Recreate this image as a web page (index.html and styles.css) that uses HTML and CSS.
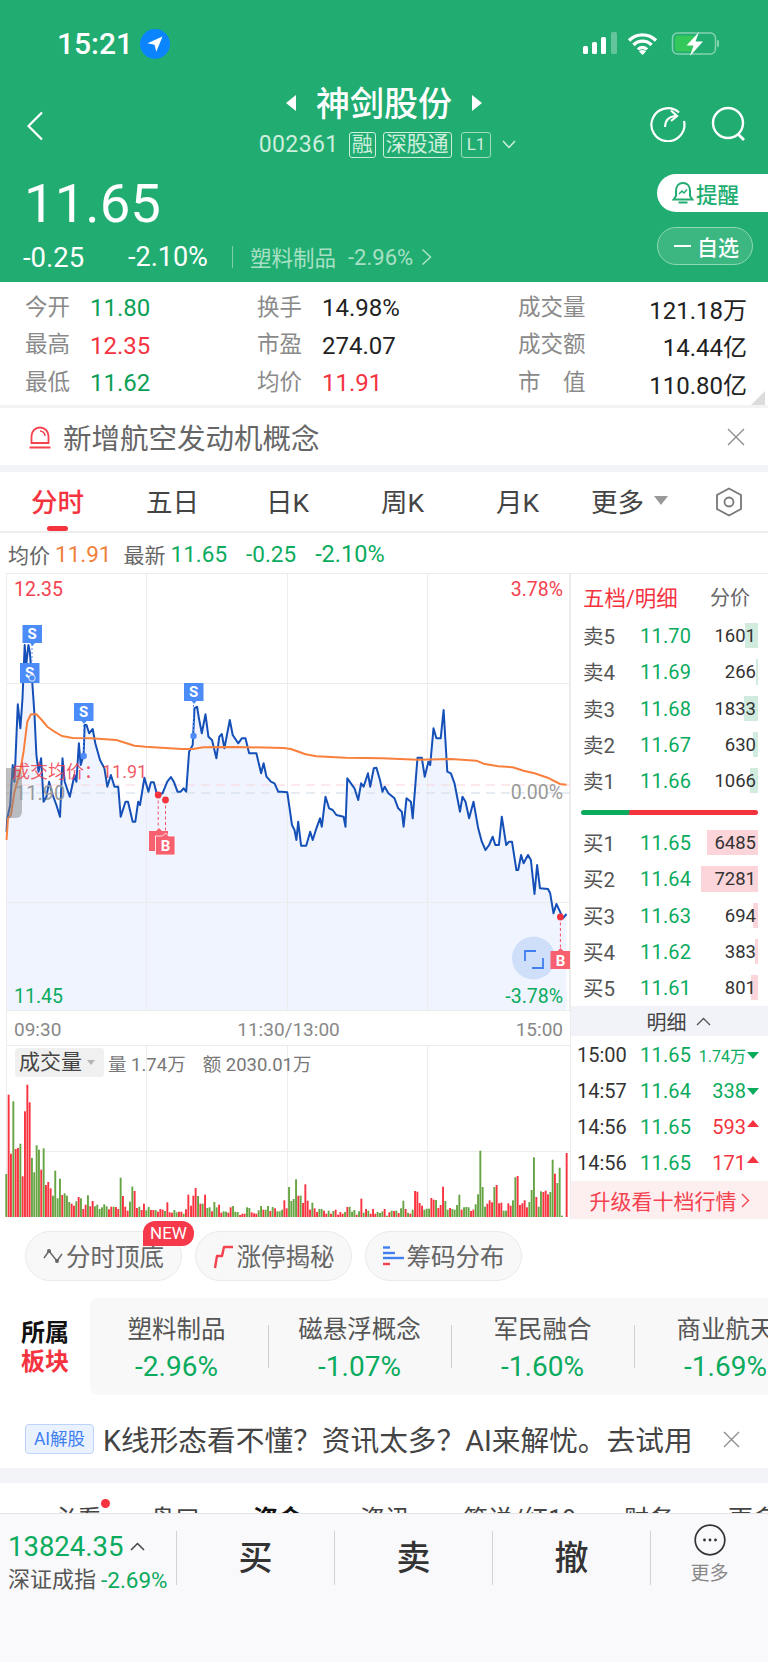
FILE: index.html
```html
<!DOCTYPE html>
<html lang="zh-CN">
<head>
    <meta charset="UTF-8" />
    <meta name="viewport" content="width=device-width, initial-scale=1.0" />
    <title>神剑股份</title>
    <link rel="stylesheet" href="styles.css">
</head>
<body>
    <!-- Green header -->
    <div class="top">
        <div class="status">
            <div class="status-left">
                <span class="clock">15:21</span>
                <span class="locate">
                    <svg width="18" height="18" viewBox="0 0 18 18"><path d="M16.5 1.5 1.5 8.2l7 1.6 1.8 7z" fill="#fff"/></svg>
                </span>
            </div>
            <svg class="status-right" width="137" height="24" viewBox="0 0 137 24">
                <rect x="0" y="14" width="5" height="8" rx="1.5" fill="#fff"/>
                <rect x="9" y="10" width="5" height="12" rx="1.5" fill="#fff"/>
                <rect x="18" y="5" width="5" height="17" rx="1.5" fill="#fff"/>
                <rect x="28" y="0" width="6" height="22" rx="1.5" fill="#fff" opacity=".3"/>
                <path d="M46 8.5a19 19 0 0 1 27 0M50.5 13a12.5 12.5 0 0 1 18 0M55 17.5a6 6 0 0 1 9 0" fill="none" stroke="#fff" stroke-width="3.4"/>
                <path d="M59.5 23l-3.5-3.5a5 5 0 0 1 7 0z" fill="#fff"/>
                <rect x="89.5" y="1" width="43" height="21" rx="5" fill="none" stroke="#fff" stroke-opacity=".45" stroke-width="1.5"/>
                <rect x="92" y="3.5" width="21" height="16" rx="3" fill="#34c85a"/>
                <rect x="134" y="8" width="2" height="7" rx="1" fill="#fff" opacity=".45"/>
                <path d="M116 0 103.5 13.5h7L107 24l13-14.5h-7.5z" fill="#fff"/>
            </svg>
        </div>

        <div class="head">
            <div class="head-left">
                <svg width="18" height="30" viewBox="0 0 18 30"><path d="M16 1.5 2.5 15 16 28.5" fill="none" stroke="#fff" stroke-width="2.2"/></svg>
            </div>
            <div class="head-center">
                <div class="title-row">
                    <span class="arrow-left"></span>
                    <span class="title">神剑股份</span>
                    <span class="arrow-right"></span>
                </div>
                <div class="code-row">
                    <span class="code">002361</span>
                    <span class="code-tag">融</span>
                    <span class="code-tag">深股通</span>
                    <span class="code-tag code-tag-dim">L1</span>
                    <svg width="14" height="9" viewBox="0 0 14 9"><path d="M1 1l6 6.5L13 1" fill="none" stroke="#d4f0e2" stroke-width="1.4"/></svg>
                </div>
            </div>
            <div class="head-right">
                <svg width="36" height="36" viewBox="0 0 36 36"><path d="M29 6.5A16.5 16.5 0 1 0 34 15" fill="none" stroke="#fff" stroke-width="2.2"/><path d="M15 21c0-6 3-10 10-11" fill="none" stroke="#fff" stroke-width="2.2"/><path d="M21 4.5l6 5.5-6 5" fill="none" stroke="#fff" stroke-width="2.2"/></svg>
                <svg width="36" height="36" viewBox="0 0 36 36"><circle cx="17" cy="17" r="15" fill="none" stroke="#fff" stroke-width="2.4"/><path d="M27 28l6 6" stroke="#fff" stroke-width="2.8"/></svg>
            </div>
        </div>

        <div class="quote">
            <div class="quote-left">
                <div class="price">11.65</div>
                <div class="change-row">
                    <span class="change-a">-0.25</span>
                    <span class="change-b">-2.10%</span>
                    <span class="change-sep"></span>
                    <span class="sector-name">塑料制品</span>
                    <span class="sector-pct">-2.96%</span>
                    <svg width="11" height="18" viewBox="0 0 11 18"><path d="M1.5 1.5 9.5 9l-8 7.5" fill="none" stroke="#b4e4cd" stroke-width="1.4"/></svg>
                </div>
            </div>
            <div class="quote-right">
                <div class="btn-remind">
                    <svg width="22" height="24" viewBox="0 0 22 24"><path d="M11 2c-5 0-7 4-7 8v5l-2.5 3.5h19L18 15v-5c0-4-2-8-7-8z" fill="none" stroke="#21ad71" stroke-width="2"/><path d="M6.5 21.5h9" stroke="#21ad71" stroke-width="2"/><path d="M7 13l3-3 2 2 3-3.5" fill="none" stroke="#21ad71" stroke-width="1.5"/></svg>
                    <span>提醒</span>
                </div>
                <div class="btn-fav">
                    <span class="fav-minus"></span>
                    <span>自选</span>
                </div>
            </div>
        </div>
    </div>

    <!-- Stats -->
    <div class="stats">
        <div class="stat"><span class="stat-label">今开</span><span class="stat-value green">11.80</span></div>
        <div class="stat"><span class="stat-label">换手</span><span class="stat-value">14.98%</span></div>
        <div class="stat stat-wide"><span class="stat-label">成交量</span><span class="stat-value">121.18万</span></div>
        <div class="stat"><span class="stat-label">最高</span><span class="stat-value red">12.35</span></div>
        <div class="stat"><span class="stat-label">市盈</span><span class="stat-value">274.07</span></div>
        <div class="stat stat-wide"><span class="stat-label">成交额</span><span class="stat-value">14.44亿</span></div>
        <div class="stat"><span class="stat-label">最低</span><span class="stat-value green">11.62</span></div>
        <div class="stat"><span class="stat-label">均价</span><span class="stat-value red">11.91</span></div>
        <div class="stat stat-wide"><span class="stat-label">市　值</span><span class="stat-value">110.80亿</span></div>
        <span class="stats-corner"></span>
    </div>

    <!-- Notice -->
    <div class="notice">
        <svg width="22" height="24" viewBox="0 0 22 24"><path d="M2.5 18V11a8.5 8.5 0 0 1 17 0v7z" fill="none" stroke="#f5424f" stroke-width="1.8"/><path d="M11 6a5 5 0 0 1 5 5" fill="none" stroke="#f5424f" stroke-width="1.5"/><path d="M.5 22.5h21" stroke="#f5424f" stroke-width="2"/></svg>
        <span class="notice-text">新增航空发动机概念</span>
        <svg class="close" width="18" height="18" viewBox="0 0 18 18"><path d="M1 1l16 16M17 1 1 17" stroke="#8c8c8c" stroke-width="1.3"/></svg>
    </div>

    <!-- Period tabs -->
    <div class="tabs">
        <span class="tab tab-active">分时</span>
        <span class="tab">五日</span>
        <span class="tab">日K</span>
        <span class="tab">周K</span>
        <span class="tab">月K</span>
        <span class="tab tab-more">更多<i class="tab-caret"></i></span>
        <span class="tab-setting">
            <svg width="28" height="30" viewBox="0 0 28 30"><path d="M14 1.5 26 8v14l-12 6.5L2 22V8z" fill="none" stroke="#777" stroke-width="1.8"/><circle cx="14" cy="15" r="4.5" fill="none" stroke="#777" stroke-width="1.8"/></svg>
        </span>
    </div>

    <div class="info-row">
        <span>均价</span><span class="orange info-gap">11.91</span>
        <span class="info-next">最新</span><span class="green2 info-gap">11.65</span>
        <span class="green2 info-num">-0.25</span>
        <span class="green2 info-num info-pct">-2.10%</span>
    </div>

    <!-- Chart + order book -->
    <div class="market">
        <div class="chart-col">
            <div class="price-chart">
                <svg id="price-svg" width="570" height="438" viewBox="0 0 570 438">
                    <path id="price-area" fill="#eff4fe"/>
                    <g stroke="#ececec" stroke-width="1">
                        <path d="M6.5 0V438M146.5 0V438M287.5 0V438M427.5 0V438M569.5 0V438"/>
                        <path d="M6 .5H570M6 110.5H570M6 329.5H570M6 437.5H570"/>
                    </g>
                    <path d="M6 212H570" stroke="#fbd3d8" stroke-width="1.2" stroke-dasharray="9 6"/>
                    <path d="M6 220H570" stroke="#cdd9e6" stroke-width="1.2" stroke-dasharray="9 6"/>
                    <polyline id="price-line" fill="none" stroke="#1550b8" stroke-width="2" stroke-linejoin="round"/>
                    <polyline id="avg-line" fill="none" stroke="#f9803c" stroke-width="2" stroke-linejoin="round"/>

                    <!-- sell marks -->
                    <g class="mark-s">
                        <path d="M32 71v17" stroke="#4b8cf8" stroke-width="1" stroke-dasharray="2 2"/>
                        <path d="M22.5 52H42v18h-7l-2.500 3-2.500-3h-7.500z"/><text x="32" y="66">S</text>
                        <path d="M20 90h19.500v20H20z"/><text x="29.5" y="105">S</text>
                        <circle cx="32" cy="105" r="3.2" stroke="#fff" stroke-width=".8"/>
                        <path d="M74 130h19.500v18h-7l-2.500 3-2.500-3H74z"/><text x="83.7" y="144">S</text>
                        <circle cx="83.7" cy="183" r="3.2"/>
                        <path d="M83.7 152v30" stroke="#4b8cf8" stroke-width="1" stroke-dasharray="2 2"/>
                        <path d="M184 110h19.500v18h-7l-2.500 3-2.500-3H184z"/><text x="193.5" y="124">S</text>
                        <circle cx="193.5" cy="163" r="3.2"/>
                        <path d="M193.5 132v30" stroke="#4b8cf8" stroke-width="1" stroke-dasharray="2 2"/>
                    </g>

                    <!-- buy marks -->
                    <g class="mark-b">
                        <path d="M158.2 222v33M165.5 227v33M560.4 344v31" stroke="#f55060" stroke-width="1" stroke-dasharray="3 2.5" fill="none"/>
                        <circle cx="158.2" cy="222" r="3.4" fill="#f5333f"/>
                        <circle cx="165.5" cy="227" r="3.4" fill="#f5333f"/>
                        <circle cx="560.4" cy="344" r="3.4" fill="#f5333f"/>
                    </g>
                    <circle cx="533.5" cy="385" r="21.5" fill="#cfdffa"/>
                    <path d="M536 378h-11v10M532 395h11v-10" fill="none" stroke="#3f7ff0" stroke-width="1.8"/>
                    <g class="mark-b">
                        <path d="M149 258h7l3-3 3 3h6v20h-19z" fill="#f7606f"/>
                        <path d="M155.5 263h7l3-3 3 3h6.500v19h-19.500z" fill="#f7606f" stroke="#fff" stroke-width=".8"/>
                        <text x="165.5" y="278">B</text>
                        <path d="M550.5 378h7l3-3 3 3h6.500v18h-19.500z" fill="#f7606f"/>
                        <text x="560.5" y="393">B</text>
                    </g>
                </svg>
                <span class="axis-label top-left red-soft">12.35</span>
                <span class="axis-label top-right red-soft">3.78%</span>
                <span class="axis-label mid-right">0.00%</span>
                <span class="axis-label bottom-left green-soft">11.45</span>
                <span class="axis-label bottom-right green-soft">-3.78%</span>
                <span class="cross-handle"></span>
                <span class="cross-price">11.90</span>
                <span class="avg-tip">成交均价：11.91</span>
            </div>
            <div class="time-axis">
                <span>09:30</span><span>11:30/13:00</span><span>15:00</span>
            </div>
            <div class="volume-chart">
                <svg id="volume-svg" width="570" height="172" viewBox="0 0 570 172">
                    <g stroke="#ececec" stroke-width="1">
                        <path d="M6.5 0V172M146.5 0V172M287.5 0V172M427.5 0V172"/>
                        <path d="M6 .5H570M6 106.5H570"/>
                    </g>
                    <g id="volume-bars"></g>
                </svg>
                <div class="volume-head">
                    <span class="volume-tag">成交量<i class="volume-caret"></i></span>
                    <span class="volume-text">量 1.74万</span>
                    <span class="volume-text">额 2030.01万</span>
                </div>
            </div>
        </div>

        <div class="book">
            <div class="book-head"><span class="book-title">五档/明细</span><span class="book-alt">分价</span></div>
            <div class="book-row"><i class="depth depth-sell" style="width:13px"></i><span class="book-label">卖5</span><span class="book-price">11.70</span><span class="book-qty">1601</span></div>
            <div class="book-row"><i class="depth depth-sell" style="width:2px"></i><span class="book-label">卖4</span><span class="book-price">11.69</span><span class="book-qty">266</span></div>
            <div class="book-row"><i class="depth depth-sell" style="width:14px"></i><span class="book-label">卖3</span><span class="book-price">11.68</span><span class="book-qty">1833</span></div>
            <div class="book-row"><i class="depth depth-sell" style="width:5px"></i><span class="book-label">卖2</span><span class="book-price">11.67</span><span class="book-qty">630</span></div>
            <div class="book-row"><i class="depth depth-sell" style="width:8px"></i><span class="book-label">卖1</span><span class="book-price">11.66</span><span class="book-qty">1066</span></div>
            <div class="ratio"></div>
            <div class="book-row"><i class="depth depth-buy" style="width:51px"></i><span class="book-label">买1</span><span class="book-price">11.65</span><span class="book-qty">6485</span></div>
            <div class="book-row"><i class="depth depth-buy" style="width:57px"></i><span class="book-label">买2</span><span class="book-price">11.64</span><span class="book-qty">7281</span></div>
            <div class="book-row"><i class="depth depth-buy" style="width:5px"></i><span class="book-label">买3</span><span class="book-price">11.63</span><span class="book-qty">694</span></div>
            <div class="book-row"><i class="depth depth-buy" style="width:3px"></i><span class="book-label">买4</span><span class="book-price">11.62</span><span class="book-qty">383</span></div>
            <div class="book-row"><i class="depth depth-buy" style="width:7px"></i><span class="book-label">买5</span><span class="book-price">11.61</span><span class="book-qty">801</span></div>
            <div class="detail-band">
                明细
                <svg width="15" height="9" viewBox="0 0 15 9"><path d="M1 8l6.5-6.5L14 8" fill="none" stroke="#555" stroke-width="1.3"/></svg>
            </div>
            <div class="trade-row"><span class="trade-time">15:00</span><span class="book-price">11.65</span><span class="trade-qty trade-small green2">1.74万</span><i class="tri-down"></i></div>
            <div class="trade-row"><span class="trade-time">14:57</span><span class="book-price">11.64</span><span class="trade-qty green2">338</span><i class="tri-down"></i></div>
            <div class="trade-row"><span class="trade-time">14:56</span><span class="book-price">11.65</span><span class="trade-qty red">593</span><i class="tri-up"></i></div>
            <div class="trade-row"><span class="trade-time">14:56</span><span class="book-price">11.65</span><span class="trade-qty red">171</span><i class="tri-up"></i></div>
            <div class="upgrade">
                升级看十档行情
                <svg width="9" height="15" viewBox="0 0 9 15"><path d="M1 1l6.5 6.5L1 14" fill="none" stroke="#f5424f" stroke-width="1.4"/></svg>
            </div>
        </div>
    </div>

    <!-- Feature chips -->
    <div class="chips">
        <div class="chip">
            <svg width="20" height="16" viewBox="0 0 20 16"><path d="M1 10l5-7 8 10 5-7" fill="none" stroke="#666" stroke-width="1.4"/><circle cx="6" cy="3" r="2" fill="#666"/><circle cx="14" cy="13" r="2" fill="#666"/></svg>
            <span>分时顶底</span>
            <span class="chip-new">NEW</span>
        </div>
        <div class="chip">
            <svg width="21" height="26" viewBox="0 0 21 26"><path d="M2 25l2-12h5l2-9h9" fill="none" stroke="#f5424f" stroke-width="2.4" stroke-linejoin="round"/></svg>
            <span>涨停揭秘</span>
        </div>
        <div class="chip">
            <svg width="21" height="22" viewBox="0 0 21 22"><path d="M0 2.5h7" stroke="#3f7ff0" stroke-width="2.4"/><path d="M0 8h12" stroke="#3f7ff0" stroke-width="2.4"/><path d="M0 13h21" stroke="#3f7ff0" stroke-width="2.4"/><path d="M0 19h7" stroke="#f5424f" stroke-width="2.4"/></svg>
            <span>筹码分布</span>
        </div>
    </div>

    <!-- Sectors -->
    <div class="sectors">
        <div class="sectors-title"><span>所属</span><span class="red">板块</span></div>
        <div class="sector-card">
            <div class="sector"><span class="sector-title">塑料制品</span><span class="sector-value">-2.96%</span></div>
            <div class="sector"><span class="sector-title">磁悬浮概念</span><span class="sector-value">-1.07%</span></div>
            <div class="sector"><span class="sector-title">军民融合</span><span class="sector-value">-1.60%</span></div>
            <div class="sector"><span class="sector-title">商业航天</span><span class="sector-value">-1.69%</span></div>
        </div>
    </div>

    <!-- AI banner -->
    <div class="ai-row">
        <span class="ai-tag">AI解股</span>
        <span class="ai-text">K线形态看不懂？资讯太多？AI来解忧。去试用</span>
        <svg class="close" width="17" height="17" viewBox="0 0 17 17"><path d="M1 1l15 15M16 1 1 16" stroke="#8c8c8c" stroke-width="1.3"/></svg>
    </div>

    <!-- Info tabs, cut off by the bottom bar -->
    <div class="more-tabs">
        <span class="more-tab" style="left:52px">必看<i class="more-dot"></i></span>
        <span class="more-tab" style="left:150px">盘口</span>
        <span class="more-tab more-tab-on" style="left:253px">资金</span>
        <span class="more-tab" style="left:360px">资讯</span>
        <span class="more-tab" style="left:463px">筹说/红19</span>
        <span class="more-tab" style="left:624px">财务</span>
        <span class="more-tab" style="left:728px">更多</span>
    </div>

    <!-- Bottom bar -->
    <div class="bottom">
        <div class="index-box">
            <div class="index-top"><span class="index-value">13824.35</span><svg width="15" height="9" viewBox="0 0 15 9"><path d="M1 8l6.5-6.5L14 8" fill="none" stroke="#444" stroke-width="1.5"/></svg></div>
            <div class="index-bottom"><span class="index-name">深证成指</span><span class="index-pct">-2.69%</span></div>
        </div>
        <div class="action">买</div>
        <div class="action">卖</div>
        <div class="action">撤</div>
        <div class="action-more">
            <svg width="32" height="32" viewBox="0 0 32 32"><circle cx="16" cy="16" r="14.8" fill="none" stroke="#333" stroke-width="1.7"/><circle cx="10.5" cy="16" r="1.4" fill="#333"/><circle cx="16" cy="16" r="1.4" fill="#333"/><circle cx="21.5" cy="16" r="1.4" fill="#333"/></svg>
            <span>更多</span>
        </div>
    </div>

    <script src="chart.js"></script>
</body>
</html>
```

FILE: styles.css
```css
* {
    box-sizing: border-box;
}
html, body {
    margin: 0;
    padding: 0;
}
body {
    width: 768px;
    height: 1662px;
    overflow: hidden;
    background-color: #fff;
    font-family: Roboto, "Noto Sans CJK SC", sans-serif;
    color: #333;
}
i {
    font-style: normal;
}
.green { color: #0a9f55; }
.green2 { color: #0bab5e; }
.red { color: #f5333f; }
.orange { color: #f0813a; }

/* Green header */
.top {
    height: 282px;
    background-color: #21ad71;
    color: #fff;
}
.status {
    height: 82px;
    padding: 32px 48px 0 57px;
    display: flex;
    justify-content: space-between;
    align-items: flex-start;
}
.status-left {
    display: flex;
    align-items: center;
    height: 24px;
}
.clock {
    font-size: 30px;
    font-weight: 500;
    line-height: 24px;
}
.locate {
    width: 30px;
    height: 30px;
    margin-left: 7px;
    border-radius: 50%;
    background-color: #0a84ff;
    display: flex;
    align-items: center;
    justify-content: center;
}
.head {
    display: grid;
    grid-template-columns: 1fr auto 1fr;
    height: 78px;
}
.head-left {
    padding: 29px 0 0 26px;
}
.head-right {
    display: flex;
    justify-content: flex-end;
    gap: 25px;
    padding: 24px 21px 0 0;
}
.head-center {
    display: flex;
    flex-direction: column;
    align-items: center;
}
.title-row {
    display: flex;
    align-items: center;
    height: 40px;
    gap: 20px;
    margin-top: 1px;
}
.title {
    font-size: 34px;
    font-weight: 500;
    line-height: 40px;
    position: relative;
    top: 1px;
}
.arrow-left, .arrow-right {
    width: 0;
    height: 0;
    border-top: 8px solid transparent;
    border-bottom: 8px solid transparent;
}
.arrow-left { border-right: 10px solid #fff; }
.arrow-right { border-left: 10px solid #fff; }
.code-row {
    display: flex;
    align-items: center;
    margin: 8px 0 0 7px;
    color: #cdeedd;
}
.code {
    font-size: 23px;
    margin-right: 10px;
    letter-spacing: .4px;
}
.code-tag {
    height: 26px;
    line-height: 23px;
    padding: 0 2px;
    margin-right: 7px;
    border: 1px solid #cdeedd;
    border-radius: 3px;
    font-size: 21px;
}
.code-tag-dim {
    padding: 0 5px;
    font-size: 17px;
    margin: 0 11px 0 2px;
    border-color: #9ddcbd;
}
.quote {
    display: flex;
    justify-content: space-between;
}
.quote-left {
    padding: 15px 0 0 23px;
}
.price {
    font-size: 54.5px;
    line-height: 56px;
    margin-left: 1px;
}
.change-row {
    display: flex;
    align-items: center;
    height: 30px;
    margin-top: 11px;
}
.change-a {
    font-size: 27.5px;
    width: 105px;
}
.change-b {
    font-size: 27px;
    width: 104px;
}
.change-sep {
    width: 1px;
    height: 22px;
    background-color: #7ccfa8;
    margin-right: 17px;
}
.sector-name {
    font-size: 21.5px;
    color: #a8e0c5;
    margin: -2px 12px 0 0;
}
.sector-pct {
    font-size: 22px;
    color: #a8e0c5;
    margin-right: 8px;
}
.quote-right {
    width: 111px;
    padding-top: 14px;
}
.btn-remind {
    height: 38px;
    background-color: #fff;
    border-radius: 19px 0 0 19px;
    color: #21ad71;
    font-size: 21.5px;
    font-weight: 500;
    display: flex;
    align-items: center;
    padding-left: 15px;
    gap: 2px;
}
.btn-fav {
    width: 96px;
    height: 38px;
    margin-top: 15px;
    border: 1px solid #8cd8b4;
    border-radius: 19px;
    background-color: rgba(255, 255, 255, .12);
    font-size: 21px;
    font-weight: 500;
    display: flex;
    align-items: center;
    padding-left: 16px;
    gap: 6px;
}
.fav-minus {
    width: 17px;
    height: 2px;
    background-color: #fff;
}

/* Stats */
.stats {
    position: relative;
    height: 126px;
    padding: 7px 21px 0 25px;
    border-bottom: 3px solid #f3f3f3;
    display: grid;
    grid-template-columns: 232px 261px 1fr;
    grid-auto-rows: 37.5px;
}
.stat {
    display: flex;
    align-items: center;
    gap: 20px;
}
.stat-wide {
    justify-content: space-between;
}
.stat-label {
    font-size: 22.5px;
    color: #8a8a8a;
    margin-top: -6px;
}
.stat-value {
    font-size: 24px;
    color: #222;
    margin-top: 1px;
}
.stat-value.green { color: #0a9f55; }
.stat-value.red { color: #f5333f; }
.stats-corner {
    position: absolute;
    right: 3px;
    bottom: 0;
    width: 0;
    height: 0;
    border-left: 14px solid transparent;
    border-bottom: 14px solid #dcdcdc;
}

/* Notice */
.notice {
    height: 57px;
    padding: 0 23px 0 29px;
    display: flex;
    align-items: center;
}
.notice-text {
    font-size: 28.5px;
    color: #666;
    margin-left: 12px;
}
.close {
    margin-left: auto;
}

/* Tabs */
.tabs {
    height: 68px;
    border-top: 7px solid #f2f4f8;
    border-bottom: 2px solid #eee;
    display: flex;
    align-items: center;
}
.tab {
    position: relative;
    width: 115px;
    height: 100%;
    display: flex;
    align-items: center;
    justify-content: center;
    font-size: 26.5px;
    color: #444;
    padding-bottom: 3px;
}
.tab-more {
    padding-right: 6px;
}
.tab-active {
    color: #f5333f;
    font-weight: 500;
}
.tab-active::after {
    content: "";
    position: absolute;
    left: 47px;
    bottom: 0;
    width: 21px;
    height: 5px;
    border-radius: 3px;
    background-color: #f5333f;
}
.tab-caret {
    width: 0;
    height: 0;
    margin-left: 10px;
    border-left: 7px solid transparent;
    border-right: 7px solid transparent;
    border-top: 9px solid #999;
}
.tab-setting {
    flex: 1;
    display: flex;
    justify-content: center;
}
.info-row {
    height: 40px;
    padding: 1px 0 0 8px;
    display: flex;
    align-items: center;
    font-size: 21px;
    color: #666;
}
.info-gap {
    margin-left: 5px;
    font-size: 22.5px;
}
.info-next {
    margin-left: 12px;
}
.info-num {
    margin-left: 19px;
    font-size: 22.5px;
}
.info-pct {
    font-size: 23.5px;
}

/* Chart + order book */
.market {
    display: flex;
    height: 646px;
}
.chart-col {
    width: 570px;
}
.price-chart {
    position: relative;
    height: 438px;
}
.price-chart svg, .volume-chart svg {
    display: block;
}
.mark-s path, .mark-s circle {
    fill: #4b8cf8;
}
.mark-s text, .mark-b text {
    fill: #fff;
    font-size: 15px;
    font-weight: 700;
    text-anchor: middle;
}
.axis-label {
    position: absolute;
    font-size: 19.5px;
    line-height: 22px;
}
.red-soft { color: #f5424f; }
.green-soft { color: #0bab5e; }
.top-left { left: 14px; top: 6px; }
.top-right { right: 7px; top: 6px; }
.mid-right { right: 7px; top: 209px; color: #999; }
.bottom-left { left: 14px; top: 413px; }
.bottom-right { right: 7px; top: 413px; }
.cross-handle {
    position: absolute;
    left: 6px;
    top: 195px;
    width: 16px;
    height: 50px;
    border-radius: 0 6px 6px 0;
    background-color: rgba(130, 130, 130, .5);
}
.cross-price {
    position: absolute;
    left: 15px;
    top: 209px;
    font-size: 20px;
    line-height: 22px;
    color: #999;
}
.avg-tip {
    position: absolute;
    left: 12px;
    top: 188px;
    font-size: 18px;
    line-height: 22px;
    color: rgba(238, 60, 75, .85);
}
.time-axis {
    height: 34px;
    padding: 2px 7px 0 7px;
    border-left: 1px solid #ececec;
    margin-left: 6px;
    display: flex;
    justify-content: space-between;
    align-items: center;
    font-size: 19px;
    color: #888;
}
.volume-chart {
    position: relative;
    height: 172px;
}
.volume-head {
    position: absolute;
    left: 15px;
    top: 3px;
    display: flex;
    align-items: center;
}
.volume-tag {
    width: 89px;
    height: 29px;
    margin-right: 4px;
    padding-left: 4px;
    border-radius: 4px;
    background-color: #f0f0f0;
    font-size: 21px;
    line-height: 29px;
    color: #444;
    display: flex;
    align-items: center;
}
.volume-caret {
    width: 0;
    height: 0;
    margin-left: 5px;
    border-left: 4px solid transparent;
    border-right: 4px solid transparent;
    border-top: 5px solid #b5b5b5;
}
.volume-text {
    font-size: 18.5px;
    color: #777;
    margin-right: 17px;
}
.book {
    width: 198px;
    border-left: 1px solid #ececec;
    border-top: 1px solid #ececec;
}
.book-head {
    height: 44px;
    padding: 0 18px 0 12px;
    display: flex;
    justify-content: space-between;
    align-items: center;
    font-size: 20px;
}
.book-title {
    color: #f5333f;
    font-size: 21.5px;
}
.book-alt {
    color: #666;
}
.book-row {
    position: relative;
    height: 36.3px;
    padding: 0 12px;
    display: flex;
    align-items: center;
}
.depth {
    position: absolute;
    right: 10px;
    top: 5px;
    bottom: 6px;
}
.depth-sell { background-color: #d2ebdf; }
.depth-buy { background-color: #fbd5da; }
.book-label {
    position: relative;
    width: 57px;
    font-size: 20.5px;
    color: #555;
    margin-top: -2px;
}
.book-price {
    position: relative;
    font-size: 20px;
    letter-spacing: .2px;
    color: #0bab5e;
}
.book-qty {
    position: relative;
    margin-left: auto;
    font-size: 18.5px;
    color: #333;
}
.ratio {
    height: 5px;
    margin: 11px 10px 9.5px;
    border-radius: 3px;
    background: linear-gradient(100deg, #0bab5e 47px, #f5333f 49px);
}
.detail-band {
    height: 30px;
    margin-bottom: 1px;
    padding-left: 18px;
    background-color: #f1f3f8;
    display: flex;
    align-items: center;
    justify-content: center;
    gap: 9px;
    font-size: 20px;
    color: #444;
}
.trade-row {
    height: 36px;
    padding: 0 9px 0 6px;
    display: flex;
    align-items: center;
}
.trade-time {
    width: 63px;
    font-size: 20px;
    color: #333;
}
.trade-qty {
    margin-left: auto;
    font-size: 20px;
}
.trade-qty.red { color: #f5333f; }
.trade-small {
    font-size: 16px;
}
.tri-down, .tri-up {
    width: 0;
    height: 0;
    margin-left: 1px;
    border-left: 6.5px solid transparent;
    border-right: 6.5px solid transparent;
}
.tri-down {
    border-top: 7px solid #0bab5e;
}
.tri-up {
    border-bottom: 7px solid #f5333f;
    margin-bottom: 8px;
}
.upgrade {
    height: 38px;
    background-color: #fdeef0;
    display: flex;
    align-items: center;
    justify-content: center;
    gap: 4px;
    font-size: 21px;
    color: #f5424f;
}

/* Chips */
.chips {
    display: flex;
    gap: 13px;
    padding: 12px 0 0 25px;
}
.chip {
    position: relative;
    width: 157px;
    height: 50px;
    border: 1px solid #eaeaea;
    border-radius: 25px;
    background-color: #f8f8f8;
    display: flex;
    align-items: center;
    justify-content: center;
    gap: 3px;
    font-size: 24.5px;
    color: #666;
}
.chip span:not(.chip-new) {
    margin-top: -2px;
}
.chip-new {
    position: absolute;
    left: 117px;
    top: -11px;
    width: 51px;
    height: 25px;
    border-radius: 12px 12px 12px 0;
    background-color: #f5384a;
    color: #fff;
    font-size: 17px;
    line-height: 25px;
    text-align: center;
}

/* Sectors */
.sectors {
    display: flex;
    height: 97px;
    margin-top: 17px;
}
.sectors-title {
    width: 90px;
    padding-top: 21px;
    display: flex;
    flex-direction: column;
    align-items: center;
    font-size: 24px;
    line-height: 29px;
    font-weight: 700;
    color: #111;
}
.sectors-title .red {
    color: #f5333f;
}
.sector-card {
    flex: 1;
    display: flex;
    border-radius: 8px 0 0 8px;
    background-color: #f8f8f8;
    overflow: hidden;
}
.sector {
    position: relative;
    flex: none;
    width: 183px;
    margin-left: -5px;
    margin-right: 5px;
    display: flex;
    flex-direction: column;
    align-items: center;
    padding-top: 16px;
}
.sector + .sector::before {
    content: "";
    position: absolute;
    left: 0;
    top: 27px;
    width: 1px;
    height: 43px;
    background-color: #cfcfcf;
}
.sector-title {
    font-size: 24.5px;
    line-height: 32px;
    color: #555;
    white-space: nowrap;
}
.sector-value {
    margin-top: 6px;
    font-size: 28px;
    line-height: 30px;
    color: #0bab5e;
}

/* AI banner */
.ai-row {
    height: 73px;
    padding: 15px 28px 0 25px;
    display: flex;
    align-items: center;
}
.ai-tag {
    width: 69px;
    height: 30px;
    border: 1px solid #bcd4fb;
    border-radius: 4px;
    background-color: #eaf2ff;
    color: #3f7ff0;
    font-size: 17.5px;
    line-height: 28px;
    text-align: center;
}
.ai-text {
    margin: -2px 0 0 9px;
    font-size: 28.7px;
    color: #444;
    white-space: nowrap;
}

/* Tabs under the bar */
.more-tabs {
    position: relative;
    height: 45px;
    border-top: 15px solid #f2f4f8;
    overflow: hidden;
}
.more-tab {
    position: absolute;
    top: 21px;
    font-size: 25px;
    line-height: 32px;
    color: #444;
    white-space: nowrap;
}
.more-tab-on {
    color: #111;
    font-weight: 700;
}
.more-dot {
    position: absolute;
    right: -8px;
    top: -5px;
    width: 9px;
    height: 9px;
    border-radius: 50%;
    background-color: #f5333f;
}

/* Bottom bar */
.bottom {
    height: 149px;
    padding-top: 17px;
    border-top: 1px solid #e4e4e6;
    background-color: #f9f9fb;
    display: flex;
    align-items: flex-start;
}
.index-box {
    width: 177px;
    height: 54px;
    padding-left: 8px;
    border-right: 1px solid #d2d2d2;
}
.index-top {
    height: 29px;
    margin-top: 1px;
    display: flex;
    align-items: center;
    gap: 7px;
}
.index-value {
    font-size: 27.5px;
    color: #0bab5e;
}
.index-bottom {
    display: flex;
    align-items: center;
    gap: 5px;
    margin-top: 5px;
}
.index-name {
    font-size: 22px;
    line-height: 28px;
    color: #555;
}
.index-pct {
    font-size: 22.5px;
    color: #0bab5e;
}
.action {
    width: 158px;
    height: 54px;
    border-right: 1px solid #d2d2d2;
    font-size: 34px;
    font-weight: 500;
    line-height: 54px;
    text-align: center;
    color: #333;
}
.action-more {
    flex: 1;
    margin-top: -7px;
    display: flex;
    flex-direction: column;
    align-items: center;
    font-size: 19px;
    color: #888;
    gap: 2px;
}
```

FILE: chart.js
```js
// Traces read off the screenshot, in zoomed units: x is 2.75x, y is 3x with 24 above the chart top
const line = [[18,800],[20,760],[28,720],[35,600],[40,650],[49,418],[56,490],[62,400],[68,240],[72,300],[78,240],[82,260],[88,340],[95,450],[100,570],[106,620],[113,580],[120,710],[128,695],[135,650],[145,690],[155,720],[165,755],[172,580],[178,650],[192,695],[205,630],[210,650],[217,535],[222,600],[230,570],[233,480],[238,480],[245,505],[255,492],[262,535],[275,585],[287,610],[295,665],[305,630],[315,665],[325,665],[332,755],[345,710],[352,710],[365,770],[372,770],[380,710],[385,720],[397,638],[408,680],[415,652],[423,652],[432,690],[447,685],[460,650],[470,636],[478,650],[488,680],[497,680],[505,670],[512,680],[520,560],[530,540],[535,430],[542,425],[547,460],[555,505],[565,448],[573,515],[583,525],[595,580],[603,515],[610,507],[617,550],[632,465],[640,510],[655,535],[665,520],[675,520],[685,565],[705,565],[718,625],[725,595],[733,635],[745,650],[755,655],[765,680],[775,680],[790,682],[803,780],[810,795],[815,825],[820,770],[828,842],[842,842],[853,800],[860,825],[870,790],[880,760],[885,785],[895,695],[905,730],[915,735],[925,750],[945,755],[950,785],[955,640],[965,655],[975,670],[985,705],[993,655],[1000,665],[1012,625],[1018,665],[1028,610],[1035,608],[1045,645],[1052,680],[1058,665],[1068,685],[1085,700],[1095,730],[1105,740],[1110,785],[1118,700],[1130,710],[1135,760],[1148,578],[1160,578],[1168,635],[1178,590],[1183,600],[1192,490],[1200,520],[1212,520],[1220,435],[1230,620],[1240,625],[1250,655],[1265,740],[1272,695],[1280,710],[1290,760],[1302,710],[1315,790],[1325,830],[1335,855],[1345,840],[1355,815],[1362,840],[1372,840],[1380,755],[1392,840],[1400,830],[1408,830],[1420,915],[1425,915],[1433,870],[1440,895],[1452,870],[1460,885],[1470,987],[1477,900],[1485,970],[1507,972],[1513,985],[1522,1045],[1530,1017],[1540,1040],[1548,1060],[1558,1047]];

const avg = [[18,825],[22,760],[30,750],[40,680],[55,620],[65,560],[75,470],[85,448],[100,448],[115,465],[130,485],[150,500],[170,513],[200,519],[250,520],[320,525],[370,542],[400,545],[500,552],[530,552],[560,547],[650,546],[780,549],[800,552],[840,568],[870,574],[950,578],[1050,580],[1150,584],[1240,582],[1310,587],[1330,596],[1370,604],[1410,607],[1440,617],[1470,625],[1510,640],[1540,657],[1558,659]];

// Volume bars: colour + top of the bar in 3x zoom, one group per crop
const volume = [
    { left: 6.3, base: 412, bars: "g283 r45 r222 g65 r208 r205 g192 r290 r95 r15 r68 g235 g278 g197 g210 r270 g206 r316 r307 r326 g348 g273 g356 g297 r346 g341 g348 g367 r372 r378 g365 r352 g356 r388 r375 g347 r380 r364 g380 g375 g388 g383 g374 g380 r389 r381 g381 r382 r388 g294 r349 r381 r393 g366 g321 r334 r385 g381 r391 r372 g392 g382 r391 r391 g391 r396 r388 r390 g394 r368 r398 r399 g391 g398 r396 r396 g402 r389 r345" },
    { left: 191, base: 262, bars: "r228 r198 r175 g199 r222 g222 r195 g235 g233 r245 g217 g233 r225 r249 g245 g246 r249 r233 g229 g246 g247 r256 r252 r252 g233 g235 r248 r251 r252 g242 g229 r240 g240 g229 r244 g232 r236 g245 g245 g240 r212 r236 g172 g214 g208 g149 r198 g198 r220 r164 r213 r240 g219 r236 r247 g238 g238 r243 r252 g243 r252 g244 r240 r255 r247 r252 g247 r232 g231 g246 g241 r255 g245 r207 g249 r238 g243 r252 r238 r252 g247" },
    { left: 380, base: 262, bars: "g250 g245 r238 g258 r248 g243 r244 g243 r250 g236 g213 r238 g249 r252 g240 r184 r186 r220 r228 g240 g237 g237 r205 r210 g211 r235 r226 r171 g214 g240 r235 g238 g240 g226 g195 r240 g233 g232 g233 r244 r240 g224 g194 g63 g172 g231 r222 r212 r218 g172 r166 r221 r219 g243 g243 r221 r228 g212 g143 r139 r226 r221 r212 r233 g217 g181 g83 r202 g231 g185 r187 r183 r194 g187 g90 r132 g160 g114 g258 g262 r70" }
];

function toPoint([x, y]) {
    return `${(x / 2.75).toFixed(1)},${((y - 24) / 3).toFixed(1)}`;
}

function drawPrice() {
    const pts = line.map(toPoint);
    document.getElementById("price-line").setAttribute("points", pts.join(" "));
    document.getElementById("avg-line").setAttribute("points", avg.map(toPoint).join(" "));

    const first = (line[0][0] / 2.75).toFixed(1);
    const last = (line[line.length - 1][0] / 2.75).toFixed(1);
    document.getElementById("price-area").setAttribute("d", `M${first} 438L${pts.join("L")}L${last} 438Z`);
}

function drawVolume() {
    const holder = document.getElementById("volume-bars");
    let html = "";
    volume.forEach(group => {
        group.bars.split(" ").forEach((bar, i) => {
            const height = (group.base - Number(bar.slice(1))) / 3;
            const color = bar[0] === "r" ? "#f9333f" : "#67a544";
            const x = group.left + i * 7 / 3 - 0.95;
            html += `<rect x="${x.toFixed(1)}" y="${(172 - height).toFixed(1)}" width="1.9" height="${height.toFixed(1)}" fill="${color}"/>`;
        });
    });
    holder.innerHTML = html;
}

drawPrice();
drawVolume();
```
